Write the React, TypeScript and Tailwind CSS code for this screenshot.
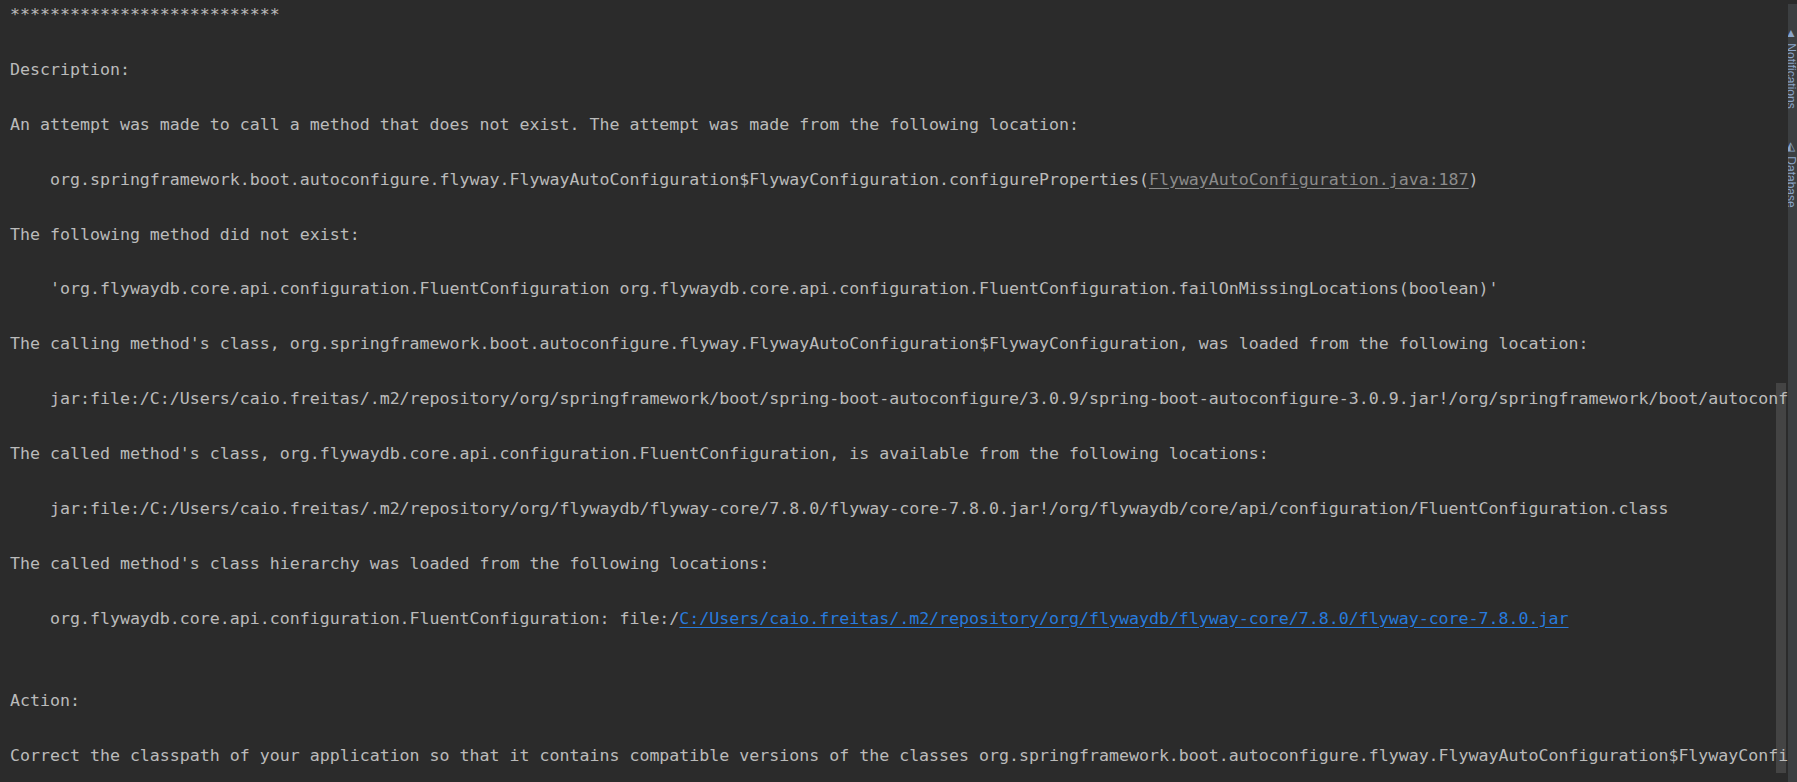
const mono = { fontFamily: '"DejaVu Sans Mono", "Liberation Mono", monospace' }
const sans = { fontFamily: '"Liberation Sans", sans-serif', writingMode: 'vertical-rl' as const }

type Seg = { t: string; kind?: 'file' | 'url' }

const lines: Seg[][] = [
  [{ t: '***************************' }],
  [],
  [{ t: 'Description:' }],
  [],
  [{ t: 'An attempt was made to call a method that does not exist. The attempt was made from the following location:' }],
  [],
  [
    { t: '    org.springframework.boot.autoconfigure.flyway.FlywayAutoConfiguration$FlywayConfiguration.configureProperties(' },
    { t: 'FlywayAutoConfiguration.java:187', kind: 'file' },
    { t: ')' },
  ],
  [],
  [{ t: 'The following method did not exist:' }],
  [],
  [{ t: "    'org.flywaydb.core.api.configuration.FluentConfiguration org.flywaydb.core.api.configuration.FluentConfiguration.failOnMissingLocations(boolean)'" }],
  [],
  [{ t: "The calling method's class, org.springframework.boot.autoconfigure.flyway.FlywayAutoConfiguration$FlywayConfiguration, was loaded from the following location:" }],
  [],
  [{ t: '    jar:file:/C:/Users/caio.freitas/.m2/repository/org/springframework/boot/spring-boot-autoconfigure/3.0.9/spring-boot-autoconfigure-3.0.9.jar!/org/springframework/boot/autoconfigure/flyway/FlywayAutoConfiguration$FlywayConfiguration.class' }],
  [],
  [{ t: "The called method's class, org.flywaydb.core.api.configuration.FluentConfiguration, is available from the following locations:" }],
  [],
  [{ t: '    jar:file:/C:/Users/caio.freitas/.m2/repository/org/flywaydb/flyway-core/7.8.0/flyway-core-7.8.0.jar!/org/flywaydb/core/api/configuration/FluentConfiguration.class' }],
  [],
  [{ t: "The called method's class hierarchy was loaded from the following locations:" }],
  [],
  [
    { t: '    org.flywaydb.core.api.configuration.FluentConfiguration: file:/' },
    { t: 'C:/Users/caio.freitas/.m2/repository/org/flywaydb/flyway-core/7.8.0/flyway-core-7.8.0.jar', kind: 'url' },
  ],
  [],
  [],
  [{ t: 'Action:' }],
  [],
  [{ t: 'Correct the classpath of your application so that it contains compatible versions of the classes org.springframework.boot.autoconfigure.flyway.FlywayAutoConfiguration$FlywayConfiguration and org.flywaydb.core.api.configuration.FluentConfiguration' }],
]

export default function App() {
  return (
    <div className="flex h-[782px] w-[1797px] overflow-hidden bg-[#2b2b2b]">
      {/* console output */}
      <div className="relative h-full w-[1788px] shrink-0 overflow-hidden">
        <div
          className="relative z-10 whitespace-pre pl-[10px] pt-[1px] text-[16.6px] leading-[27.44px] text-[#bbbbbb]"
          style={mono}
        >
          {lines.map((segs, i) => (
            <div key={i} className="h-[27.44px]">
              {segs.map((s, j) =>
                s.kind === 'file' ? (
                  <span key={j} className="text-[#8c8c8c] underline decoration-[#8c8c8c] underline-offset-[3px]">
                    {s.t}
                  </span>
                ) : s.kind === 'url' ? (
                  <span key={j} className="text-[#287bde] underline decoration-[#287bde] underline-offset-[3px]">
                    {s.t}
                  </span>
                ) : (
                  <span key={j}>{s.t}</span>
                )
              )}
            </div>
          ))}
        </div>
        {/* scrollbar thumb, drawn over the text */}
        <div className="absolute left-[1776px] top-[383px] h-[390px] w-[10px] bg-[#4b4b4b]/80" />
      </div>

      {/* right tool window strip, labels cut off by the window edge */}
      <div className="flex w-[9px] shrink-0 flex-col overflow-hidden pt-[4px]">
        <div className="flex flex-1 flex-col gap-[30px] overflow-hidden bg-[#3c3f41] pl-[4px] pt-[22px]">
          <div className="whitespace-nowrap text-[12px] leading-none text-[#8aa4c8]" style={sans}>
            ▲ Notifications
          </div>
          <div className="whitespace-nowrap text-[12px] leading-none text-[#8aa4c8]" style={sans}>
            ◭ Database
          </div>
        </div>
      </div>
    </div>
  )
}
